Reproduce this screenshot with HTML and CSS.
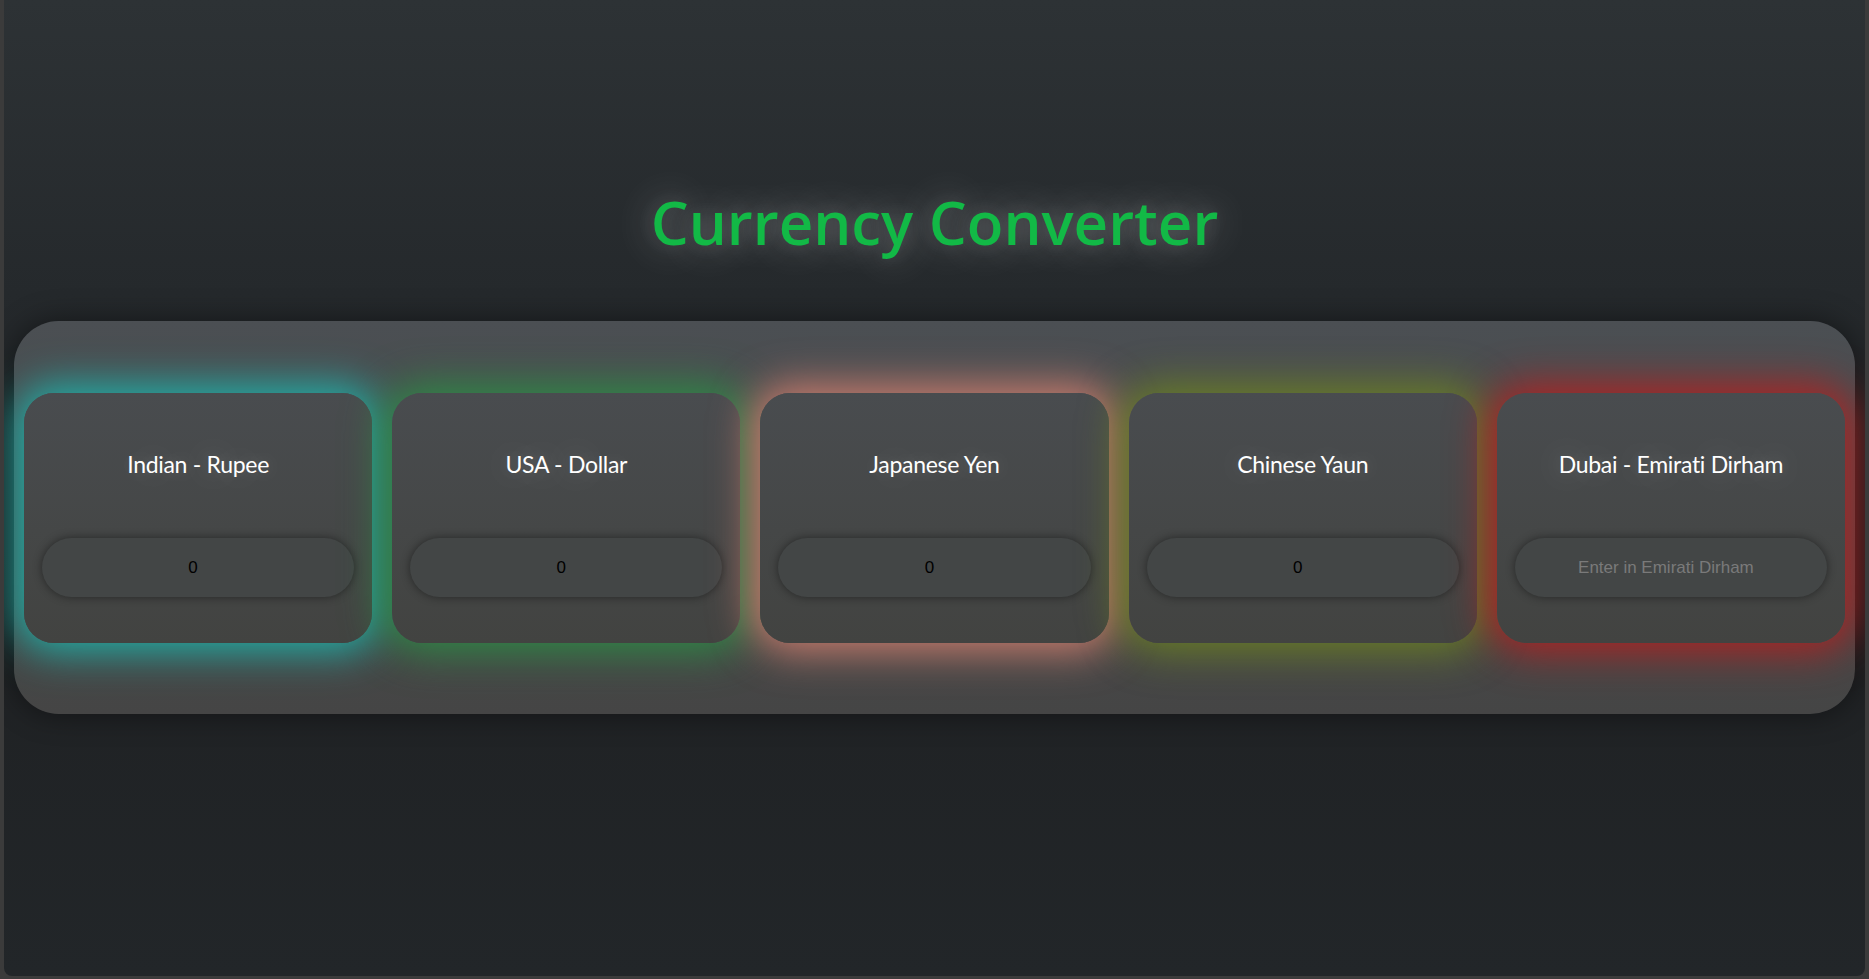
FILE: index.html
```html
<!DOCTYPE html>
<html lang="en">
<head>
<meta charset="utf-8">
<title>Currency Converter</title>
<link rel="stylesheet" href="styles.css">
</head>
<body>
<div class="page">
  <h1 class="title">Currency Converter</h1>
  <div class="panel">
    <div class="card card-inr">
      <h2 class="card-title">Indian - Rupee</h2>
      <input class="amount" type="text" value="0">
    </div>
    <div class="card card-usd">
      <h2 class="card-title">USA - Dollar</h2>
      <input class="amount" type="text" value="0">
    </div>
    <div class="card card-jpy">
      <h2 class="card-title">Japanese Yen</h2>
      <input class="amount" type="text" value="0">
    </div>
    <div class="card card-cny">
      <h2 class="card-title">Chinese Yaun</h2>
      <input class="amount" type="text" value="0">
    </div>
    <div class="card card-aed">
      <h2 class="card-title">Dubai - Emirati Dirham</h2>
      <input class="amount" type="text" placeholder="Enter in Emirati Dirham">
    </div>
  </div>
</div>
</body>
</html>
```

FILE: styles.css
```css
html, body {
  margin: 0;
  padding: 0;
}
body {
  background: #3b3b3b;
}
.page {
  margin: 0 4px 3px 4px;
  height: 976px;
  box-sizing: border-box;
  border-radius: 0 0 8px 8px;
  background: linear-gradient(180deg, #2d3235 0%, #25292c 30%, #1f2123 60%, #222629 100%);
  padding-top: 186px;
  overflow: hidden;
}
.title {
  margin: 0 0 63px 0;
  font-family: "Open Sans", "Noto Sans", sans-serif;
  font-weight: 600;
  font-size: 60px;
  line-height: 72px;
  letter-spacing: 0;
  color: #12b946;
  text-align: center;
  text-shadow: 0 0 40px rgba(255, 255, 255, 0.4), 0 0 20px rgba(255, 255, 255, 0.15);
}
.panel {
  margin: 0 10px;
  padding: 72px 10px 71px 10px;
  display: flex;
  gap: 20px;
  border-radius: 45px;
  background: linear-gradient(180deg, #4b4f53 0%, #474949 60%, #454545 100%);
  box-shadow: 0 0 30px rgba(0, 0, 0, 0.45);
}
.card {
  flex: 1 1 0;
  height: 250px;
  box-sizing: border-box;
  padding: 0 18px 46px 18px;
  border-radius: 30px;
  background: linear-gradient(180deg, #494c4f 0%, #454747 55%, #424341 100%);
  display: flex;
  flex-direction: column;
}
.card-inr { box-shadow: 0 0 40px 8px rgba(32, 178, 170, 1); }
.card-usd { box-shadow: 0 0 40px 8px rgba(46, 139, 70, 1); }
.card-jpy { box-shadow: 0 0 40px 8px rgba(205, 125, 110, 1); }
.card-cny { box-shadow: 0 0 40px 8px rgba(107, 130, 35, 0.95); }
.card-aed { box-shadow: 0 0 40px 8px rgba(178, 34, 34, 1); }
.card-title {
  margin: 0;
  height: 145px;
  line-height: 143px;
  font-family: "Lato", "Open Sans", sans-serif;
  font-weight: 400;
  font-size: 23px;
  letter-spacing: -0.3px;
  color: #ffffff;
  text-align: center;
  text-shadow: 0 0 40px rgba(255, 255, 255, 0.4), 0 0 16px rgba(255, 255, 255, 0.12);
}
.amount {
  display: block;
  width: 100%;
  height: 59px;
  box-sizing: border-box;
  border: none;
  outline: none;
  border-radius: 30px;
  background: #434646;
  box-shadow: 0 0 10px rgba(0, 0, 0, 0.45);
  font-family: "Liberation Sans", Arial, sans-serif;
  font-size: 17px;
  color: #000000;
  text-align: center;
  padding: 0 20px 0 10px;
}
.amount::placeholder {
  color: #7a7a7a;
}
```
